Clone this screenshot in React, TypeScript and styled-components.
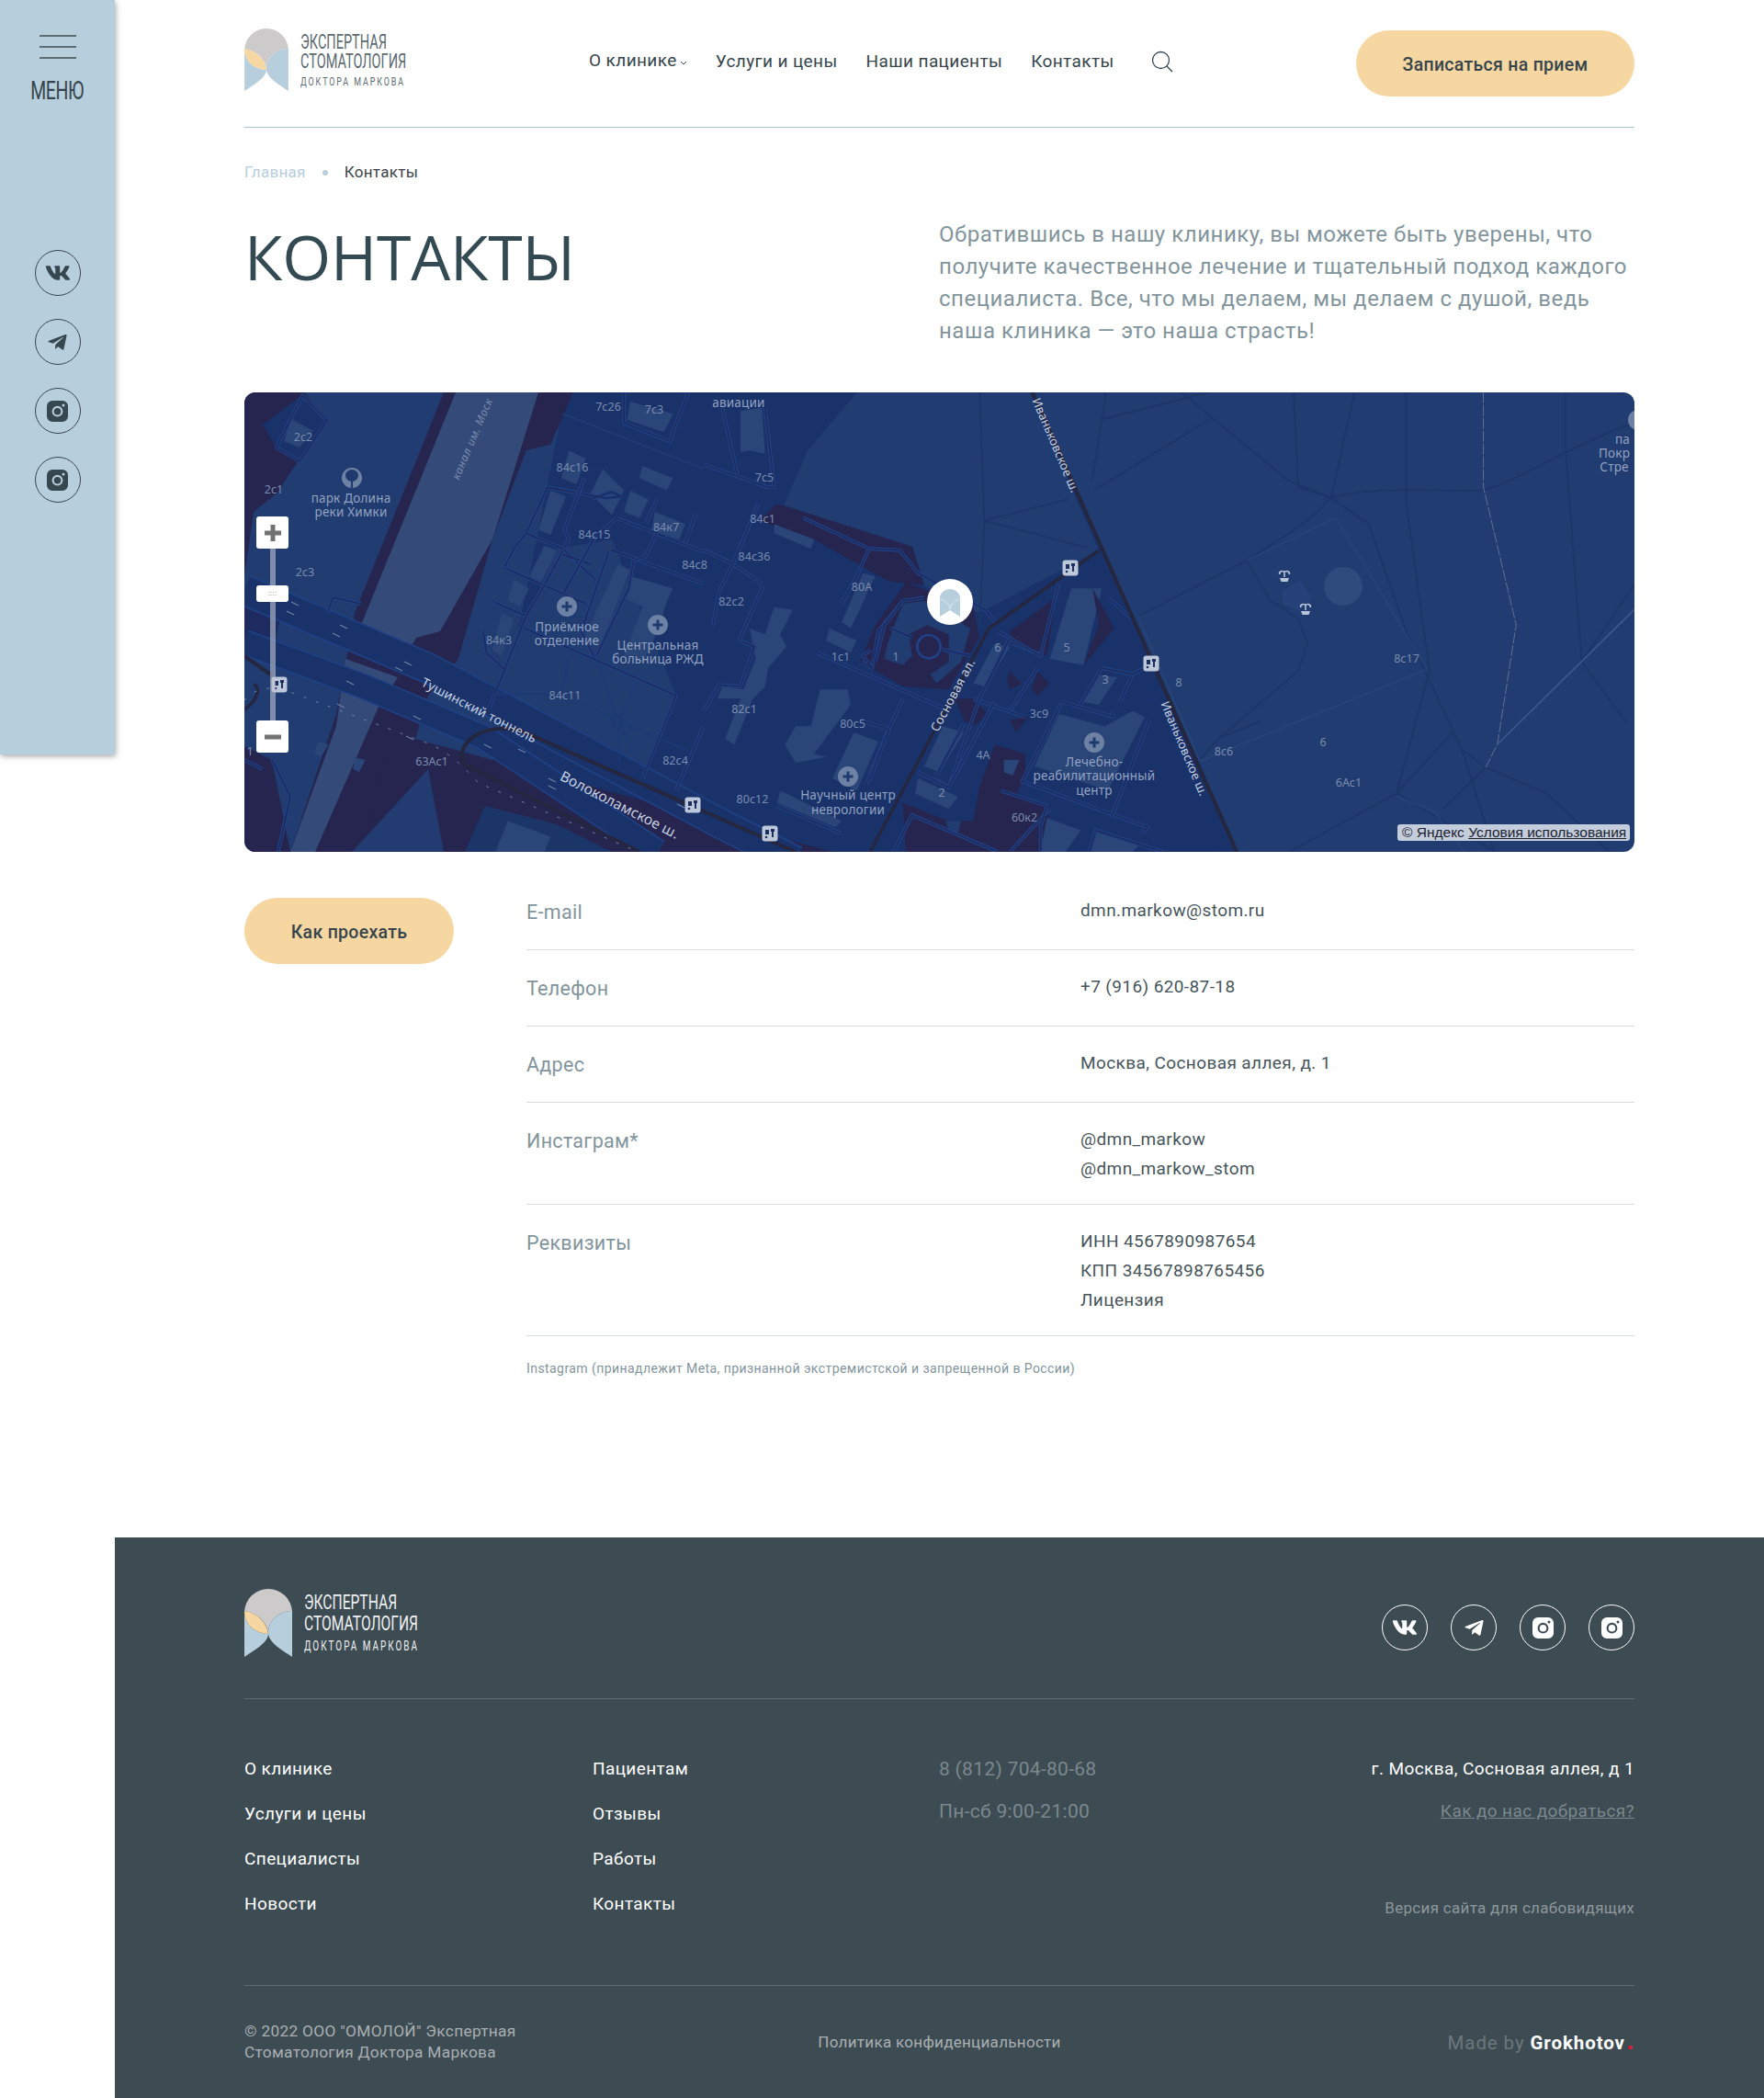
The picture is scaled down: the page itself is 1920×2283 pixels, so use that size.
import React, { FunctionComponent } from 'react';
import styled, { createGlobalStyle } from 'styled-components';
import { FaVk, FaTelegramPlane } from 'react-icons/fa';

const DARK = '#36454c';
const SAND = '#f6d7a2';
const SKY = '#b7cedc';

const GlobalStyle = createGlobalStyle`
  html, body {
    margin: 0;
    padding: 0;
    background: #fff;
  }
  body {
    font-family: Roboto, "Noto Sans", sans-serif;
    color: ${DARK};
    letter-spacing: 0.3px;
  }
  * {
    box-sizing: border-box;
  }
`;

const LogoMark: FunctionComponent<{ className?: string }> = ({ className }) => (
  <svg className={className} viewBox="0 0 52 74">
    <path d="M0 26A26 26 0 0 1 52 26V24C38 24 26 34 26 48 24 36 14 26 0 24Z" fill="#cdcacb" />
    <path d="M52 24C38 24 26 34 26 48 26 58 40 66 52 74Z" fill={SKY} />
    <path d="M0 24C0 38 10 48 26 49 26 58 12 66 0 74Z" fill={SKY} />
    <path d="M0 24C14 26 24 36 26 49 10 48 0 38 0 24Z" fill={SAND} />
  </svg>
);

const InstagramIcon = () => (
  <svg width="23" height="23" viewBox="0 0 23 23">
    <path
      fillRule="evenodd"
      fill="currentColor"
      d="M6 0H17A6 6 0 0 1 23 6V17A6 6 0 0 1 17 23H6A6 6 0 0 1 0 17V6A6 6 0 0 1 6 0ZM11.5 5.8A5.9 5.9 0 1 0 11.5 17.6 5.9 5.9 0 1 0 11.5 5.8ZM11.5 7.9A3.8 3.8 0 1 1 11.5 15.5 3.8 3.8 0 1 1 11.5 7.9ZM18 3.4A1.5 1.5 0 1 0 18 6.4 1.5 1.5 0 1 0 18 3.4Z"
    />
  </svg>
);

const Socials = () => (
  <>
    <SocialLink><FaVk size={28} /></SocialLink>
    <SocialLink><FaTelegramPlane size={23} /></SocialLink>
    <SocialLink><InstagramIcon /></SocialLink>
    <SocialLink><InstagramIcon /></SocialLink>
  </>
);

// thin road: blue casing with a dark core
const Road: FunctionComponent<{ d: string }> = ({ d }) => (
  <>
    <path d={d} fill="none" stroke="#1f4287" strokeWidth="12" strokeLinejoin="round" />
    <path d={d} fill="none" stroke="#1f2a5c" strokeWidth="5" strokeLinejoin="round" />
  </>
);

const westRoads = [
  'M190 10L270 90 180 225 105 180Z',
  'M1240 0L1240 100 1390 160 1410 100 1450 0',
  'M850 570L880 510 920 460 990 310 1180 345 1230 340 1200 325 1140 345',
  'M1110 280L1045 450 1060 480 980 630',
  'M920 460L1040 510 1145 610',
  'M1040 530L1130 560',
  'M855 575L1115 690',
  'M1215 410L1140 480 1040 660',
  'M1215 410L1500 520',
  'M1190 520L1100 780 1145 870',
  'M1200 515L1500 625',
  'M1310 430L1350 345',
  'M1270 550L1310 535 1350 450',
  'M1440 490L1475 395',
  'M1270 550L1255 640 1150 860',
  'M815 685L920 730 980 630',
  'M780 780L790 850 850 905 920 730',
  'M800 1030L850 905',
  'M915 770L1410 990 1300 1260',
  'M1410 1300L1500 1090',
  'M0 1200L60 1230',
  'M90 1200L150 1320 110 1500',
  'M270 720L290 670 380 690',
];

const westPaths = [
  'M1150 870L1220 1075 1300 1230',
  'M1280 950L1220 1075',
  'M820 985L1000 985',
  'M1095 1010L1220 1075 1450 1170',
  'M1220 1075L1225 1210',
  'M1060 860L1035 985',
];

const centerRoads = [
  'M0 235L210 310 230 310 200 50',
  'M60 50L110 270',
  'M325 410L540 510 640 515 700 590 920 710 950 750',
  'M540 510L500 600 450 690',
  'M95 560L185 620 190 640 115 810 165 830 120 960 50 955 0 1040',
  'M0 515L95 560 180 360',
  'M95 560L50 650 30 760',
  'M370 850L780 1030',
  'M650 1000L590 1130 530 1280',
  'M510 1070L605 1100 540 1270',
  'M240 1350L450 1440',
  'M650 680L570 780 550 900',
  'M1010 820L1110 860',
  'M960 780L1100 860 1160 620',
  'M1170 1010L1340 1060 1330 1040',
  'M1170 1010L1040 1270 1450 1420 1430 1440',
  'M1400 920L1360 1010',
  'M1300 900L1230 1020',
  'M1300 900L1400 920 1460 890',
  'M1090 900L1000 1040',
  'M880 1000L1050 1060',
  'M1000 800L900 1000 800 1290 750 1260',
  'M760 1250L850 1080',
  'M700 1240L800 1290',
  'M950 1010L810 1270',
  'M1130 1360L1000 1500',
  'M970 1300L1120 1350 1100 1420 1100 1500',
  'M1455 1070L1330 1390',
  'M1320 670L1400 740',
  'M620 1500L680 1380 960 1500',
  'M1260 1500L1280 1430 1500 1500',
  'M560 880L590 760 650 680 720 670',
  'M610 770L680 800',
  'M780 840L870 860',
  'M515 880L550 900 520 860 545 840',
];

const parkLines = [
  'M800 20L810 330 880 365',
  'M560 20L790 310 880 365',
  'M930 20L880 365',
  'M1040 20L1040 380 1090 930 1020 1330',
  'M880 365C1000 320 1100 350 1200 340 1260 330 1380 200 1527 120',
  'M1380 20L1380 200 1415 900 1510 1100',
  'M880 365L960 450 1040 800 1080 930 1160 1190 1210 1245 1340 1330 1480 1530',
  'M880 365C830 450 780 490 700 570L470 750',
  'M700 570L750 700 810 760 830 840 810 930 640 1150 600 1220',
  'M640 1150L730 1095',
  'M1140 1130L1020 1330 780 1530',
  'M1020 1330L1240 1530',
  'M1210 1245L1120 1380',
  'M1160 1190L1230 1530',
  'M390 110L620 20',
  'M370 310L400 20',
  'M620 110L375 340',
  'M140 440L320 370',
  'M140 440L365 530',
  'M140 440L130 20',
  'M140 440L130 800',
  'M1415 900L1527 650',
];

// little direction arrows on the highway, map coordinates
const arrows: [number, number][] = [
  [55, 230], [50, 240], [108, 255], [100, 264], [178, 295], [168, 301], [115, 316], [105, 341],
  [188, 354], [180, 376], [265, 385], [302, 390], [335, 422], [380, 440], [335, 430], [475, 450],
];

const numbers: [string, number, number][] = [
  ['7с26', 396, 20], ['7с3', 446, 23], ['2с2', 64, 53], ['2с1', 32, 110], ['2с3', 66, 200],
  ['84с16', 357, 86], ['84с15', 381, 159], ['84к7', 459, 151], ['84с8', 490, 192], ['84к3', 277, 274],
  ['84с11', 349, 334], ['63Ас1', 204, 406], ['82с4', 469, 405], ['1', 6, 395], ['7с5', 566, 97],
  ['84с1', 564, 142], ['84с36', 555, 183], ['82с2', 530, 232], ['80А', 672, 216], ['1с1', 649, 292],
  ['1', 709, 292], ['82с1', 544, 349], ['80с5', 662, 365], ['80с12', 553, 447], ['6', 820, 282],
  ['5', 895, 282], ['3', 937, 317], ['3с9', 865, 354], ['4А', 804, 399], ['2', 759, 440],
  ['60к2', 849, 467], ['8', 1017, 320], ['8с17', 1265, 294], ['8с6', 1066, 395], ['6', 1174, 385],
  ['6Ас1', 1202, 429],
];

const places: [string, number, number][] = [
  ['авиации', 538, 16], ['парк Долина', 116, 120], ['реки Химки', 116, 135], ['Приёмное', 351, 260],
  ['отделение', 351, 275], ['Центральная', 450, 280], ['больница РЖД', 450, 295], ['Научный центр', 657, 443],
  ['неврологии', 657, 459], ['Лечебно-', 925, 407], ['реабилитационный', 925, 422], ['центр', 925, 438],
  ['па', 1500, 56], ['Покр', 1491, 71], ['Стре', 1491, 86],
];

const roadNames: [string, number, number, number, number][] = [
  ['Тушинский тоннель', 255, 347, 27, 14],
  ['Волоколамское ш.', 408, 450, 27, 15.5],
  ['Сосновая ал.', 772, 330, -62, 13.5],
  ['Иваньковское ш.', 882, 58, 67, 13],
  ['Иваньковское ш.', 1022, 388, 67, 13],
];

const crosses: [number, number][] = [[351, 233], [450, 253], [657, 418], [925, 381]];
const stops: [number, number][] = [[38, 318], [488, 449], [572, 480], [899, 191], [987, 295]];

const CityMap = () => (
  <MapSvg viewBox="0 0 1513 500">
    <rect width="1513" height="500" fill="#203c70" />

    {/* hospital quarter and the land south of the park */}
    <path d="M357 0H667L613 63 587 123 727 168 740 210 800 240 930 172 855 0H857L1081 500H240L270 400 350 0Z" fill="#19326a" />
    <path d="M273 328L340 170 400 160 470 330 433 420 267 333Z" fill="#203c70" />

    {/* dark ground along the canal and the highway */}
    <path d="M217 0H358L333 57 307 63 270 160 233 290 200 330 150 500H50L100 350 120 240Z" fill="#25254f" />
    <path d="M0 0H65L90 30 55 80 35 110 10 130 0 200Z" fill="#25254f" />
    <path d="M0 230L40 240 30 290 0 280Z" fill="#1d2b60" />
    <path d="M0 385L30 400 50 500H0Z" fill="#25254f" />
    <path d="M160 370L640 500H130Z" fill="#25254f" />
    <path d="M117 500L200 410 217 500Z" fill="#223c72" />
    <path d="M240 500L262 450 340 470 400 500Z" fill="#1c3568" />
    <path d="M587 123L727 168 740 210 700 205 620 160 560 140 578 122Z" fill="#25254f" />
    <path d="M20 35L63 3 90 30 60 75 35 60Z" fill="#19326a" />

    {/* canal */}
    <path d="M230 0H320L270 160 213 260 187 267 175 287 127 253Z" fill="#344a78" />
    <path d="M110 290L167 310 147 340 100 363Z M100 363L147 340 77 500H50Z" fill="#344a78" />
    <path d="M333 57L307 63 270 160 233 290 250 285 300 170 333 60Z" fill="#203c70" />

    {/* highway bands */}
    <path d="M0 215L200 300 520 470 600 510" fill="none" stroke="#1f4287" strokeWidth="34" />
    <path d="M0 215L200 300 520 470 600 510" fill="none" stroke="#19336a" strokeWidth="31" />
    <path d="M0 272L130 320 260 375 450 500" fill="none" stroke="#1f4287" strokeWidth="28" />
    <path d="M0 272L130 320 260 375 450 500" fill="none" stroke="#19336a" strokeWidth="25" />
    {arrows.map(([x, y]) => (
      <path key={`${x}-${y}`} d={`M${x - 4} ${y - 2}L${x + 4} ${y + 2}`} stroke="#6f82a5" strokeWidth="1.2" />
    ))}

    {/* buildings */}
    <g fill="#2a4578" transform="scale(0.3333)">
      <path d="M150 85L225 125 180 180 130 160Z" />
      <path d="M1060 190L1115 215 1085 300 1035 280Z" />
      <path d="M1300 240L1400 280 1380 320 1290 280Z" />
      <path d="M1000 320L1050 340 1000 465 960 450Z" />
      <path d="M1170 250L1240 320 1200 400 1130 330Z" />
      <path d="M1260 320L1320 350 1290 410 1240 390Z" />
      <path d="M1340 390L1440 430 1420 480 1330 450Z" />
      <path d="M980 500L1020 515 970 620 930 600Z" />
      <path d="M1220 560L1260 580 1160 830 1110 800Z" />
      <path d="M880 610L930 640 900 700 860 680Z" />
      <path d="M840 720L880 740 840 860 810 840Z" />
      <path d="M1260 600L1400 640 1380 680 1350 780 1300 880 1240 860 1300 700 1240 670Z" />
      <path d="M1260 30L1400 70 1370 130 1250 90Z" />
      <path d="M240 1140L275 1150 250 1190 230 1180Z" />
      <path d="M360 1190L395 1200 375 1240 355 1230Z" />
      <path d="M860 1400L1000 1450 980 1500H820Z" />
    </g>
    <g fill="#2a4578" transform="translate(500 0) scale(0.3333)">
      <path d="M120 60L190 50 200 200 150 190 120 195Z" />
      <path d="M230 430L360 480 350 510 230 460Z" />
      <path d="M520 590L560 600 480 770 450 750Z" />
      <path d="M230 700L290 710 250 790 270 830 210 900 200 960 160 1000 100 1150 70 1130 120 1000 45 1000 60 960 130 970 170 870 150 770 200 790Z" />
      <path d="M380 970L470 970 480 1020 360 1180 400 1190 300 1210 265 1150 300 1090 350 1090Z" />
      <path d="M490 1110L570 1140 500 1300 420 1260Z" />
      <path d="M250 1300L450 1400 430 1420 240 1340Z" />
      <path d="M410 770L500 810 480 850 400 810Z" />
      <path d="M1200 640L1300 640 1240 890 1130 870Z" />
      <path d="M1160 1050L1310 1090 1400 1040 1440 1060 1320 1300 1080 1220Z" />
      <path d="M1280 920L1350 930 1290 1020 1240 1010Z" />
      <path d="M780 1090L850 1110 770 1240 720 1220Z" />
      <path d="M950 820L1000 830 920 960 880 950Z" />
      <path d="M700 1260L830 1320 800 1360 690 1310Z" />
      <path d="M1120 1390L1230 1430 1180 1500H1100Z" />
      <path d="M1280 1430L1420 1480 1400 1500H1260Z" />
    </g>

    {/* clinic grounds */}
    <g transform="translate(500 0) scale(0.3333)">
      <path d="M660 620L880 700 900 800 800 970 650 960 510 880 560 760Z" fill="#25254f" />
      <path d="M650 690L720 680 870 770 840 880 760 950 740 920 800 880 800 790 730 760 670 790 680 860 650 890 590 870 600 820Z" fill="#203c70" />
      <circle cx="735" cy="830" r="38" fill="#25254f" stroke="#1f4287" strokeWidth="8" />
      <path d="M1000 780L1150 670 1120 860 1010 820Z" fill="#25254f" />
      <path d="M1270 640L1340 770 1240 890 1290 760Z" fill="#25254f" />
      <path d="M1000 910L1040 950 1000 970 990 940ZM1090 910L1130 950 1090 990 1070 970Z" fill="#25254f" />
      <path d="M1000 1070L1060 1060 1020 1110ZM950 1150L1050 1180 1050 1240 1020 1320 1130 1350 1100 1500H660L650 1340 800 1400 880 1400 900 1290Z" fill="#25254f" />
      <path d="M820 1000L880 1000 930 1050 880 1090 850 1070Z" fill="#25254f" />
      <path d="M790 1400L840 1400 830 1440 800 1430Z" fill="#203c70" />
      <path d="M980 1200L1030 1200 1010 1250 980 1240ZM1120 1390L1230 1430 1180 1500H1100Z" fill="#2a4578" />
    </g>

    {/* streets inside the quarters */}
    <g transform="scale(0.3333)">
      {westRoads.map(d => <Road key={d} d={d} />)}
      {westPaths.map(d => <path key={d} d={d} fill="none" stroke="#1c3a77" strokeWidth="5" />)}
      <circle cx="1218" cy="1075" r="18" fill="#203c70" stroke="#1c3a77" strokeWidth="5" />
      <path d="M1040 70L1500 250" fill="none" stroke="#24427a" strokeWidth="3" />
    </g>
    <g transform="translate(500 0) scale(0.3333)">
      {centerRoads.map(d => <Road key={d} d={d} />)}
    </g>

    {/* park paths */}
    <g transform="translate(734 -7) scale(0.51 0.3333)" fill="none">
      {parkLines.map(d => <path key={d} d={d} stroke="#1c3668" strokeWidth="2" vectorEffect="non-scaling-stroke" />)}
      <path d="M700 570L890 430 1085 925 600 1225 470 760" stroke="#2b4a7e" strokeWidth="1" vectorEffect="non-scaling-stroke" />
      <path d="M1205 20L1205 330 1275 780 1235 1170 1210 1245" stroke="#5d7099" strokeWidth="1" strokeDasharray="12 2" vectorEffect="non-scaling-stroke" />
      <path d="M1235 1170L1527 730" stroke="#3c5b8d" strokeWidth="1.5" vectorEffect="non-scaling-stroke" />
      <path d="M1020 1340L1100 1390 1170 1530" stroke="#2b4a7e" strokeWidth="1" vectorEffect="non-scaling-stroke" />
    </g>
    <circle cx="1196" cy="211" r="21" fill="#2f4a7d" />
    <path d="M1130 215L1150 205 1162 225 1148 238 1130 230Z" fill="#27427a" />

    {/* main carriageways */}
    <g fill="none" stroke="#25263f" strokeLinejoin="round">
      <path d="M857 -2L1081 502" strokeWidth="4" />
      <path d="M930 172L810 257 680 502" strokeWidth="3.5" />
      <path d="M0 287L30 308" strokeWidth="4" />
      <path d="M600 500L310 372 C262 352 225 385 240 405L430 500" strokeWidth="4" />
      <path d="M0 345C15 335 18 320 10 318" strokeWidth="3.5" />
    </g>
    <path d="M0 335C10 322 30 318 50 326L200 382C225 392 240 410 255 425L440 505" fill="none" stroke="#6f82a5" strokeWidth="1" strokeDasharray="3 11" />

    {crosses.map(([x, y]) => (
      <g key={`${x}-${y}`}>
        <circle cx={x} cy={y} r="11" fill="#6d81a5" />
        <path d={`M${x - 5.5} ${y}h11M${x} ${y - 5.5}v11`} stroke="#1f3a6e" strokeWidth="3" />
      </g>
    ))}
    <circle cx="117" cy="93" r="11" fill="#6d81a5" />
    <path d="M117 104V93M111 90a6 5 0 0 1 12 0 4 4 0 0 1-12 0Z" fill="#1f3a6e" stroke="#1f3a6e" strokeWidth="2" />
    <circle cx="1517" cy="30" r="11" fill="#6d81a5" />

    {stops.map(([x, y]) => (
      <g key={`${x}-${y}`}>
        <rect x={x - 8.5} y={y - 8.5} width="17" height="17" rx="3" fill="#bcc7da" />
        <path d={`M${x - 5} ${y - 4}h4v5h-4zM${x + 1} ${y - 5}h4v3h-1v6h-2v-6h-1z`} fill="#1d2f5f" />
        <circle cx={x - 4} cy={y + 4} r="1.3" fill="#1d2f5f" />
      </g>
    ))}

    <g fill="#b8c4d8" transform="translate(1132 200)">
      <path d="M-5 2h10l-1.5 4h-7zM-0.8 -6h1.6v7h-1.6zM-6 -2a3 3 0 0 1 6-2 3 3 0 0 1 6 2h-1.5a2 2 0 0 0-4.5-1 2 2 0 0 0-4.5 1z" />
    </g>
    <g fill="#b8c4d8" transform="translate(1155 236)">
      <path d="M-5 2h10l-1.5 4h-7zM-0.8 -6h1.6v7h-1.6zM-6 -2a3 3 0 0 1 6-2 3 3 0 0 1 6 2h-1.5a2 2 0 0 0-4.5-1 2 2 0 0 0-4.5 1z" />
    </g>

    {numbers.map(([t, x, y]) => <NumberLabel key={`${t}-${x}`} x={x} y={y}>{t}</NumberLabel>)}
    {places.map(([t, x, y]) => <PlaceLabel key={`${t}-${x}`} x={x} y={y}>{t}</PlaceLabel>)}
    {roadNames.map(([t, x, y, a, size]) => (
      <RoadLabel key={`${t}-${x}`} $size={size} transform={`translate(${x} ${y}) rotate(${a})`}>{t}</RoadLabel>
    ))}
    <CanalLabel transform="translate(252 52) rotate(-67)">канал им. Моск</CanalLabel>

    {/* clinic pin */}
    <circle cx="768" cy="228" r="25" fill="#fff" />
    <g transform="translate(757 214)">
      <path d="M0 10A11 10 0 0 1 22 10V30L11 23 0 30Z" fill={SKY} />
      <path d="M1 11C7 13 10 16 11 22 12 16 15 13 21 11" fill="none" stroke="#fff" strokeWidth="0.5" />
    </g>
  </MapSvg>
);

const App: FunctionComponent = () => (
  <Page>
    <GlobalStyle />
    <Sidebar>
      <Burger>
        <span />
        <span />
        <span />
      </Burger>
      <MenuWord>МЕНЮ</MenuWord>
      <SideSocials>
        <Socials />
      </SideSocials>
    </Sidebar>

    <Main>
      <Container>
        <Header>
          <LogoLink>
            <HeaderMark />
            <LogoText>
              <LogoLine>ЭКСПЕРТНАЯ</LogoLine>
              <LogoLine>СТОМАТОЛОГИЯ</LogoLine>
              <LogoSub>ДОКТОРА МАРКОВА</LogoSub>
            </LogoText>
          </LogoLink>
          <Nav>
            <NavItem $raised>
              О клинике
              <Chevron width="8" height="5" viewBox="0 0 8 5">
                <path d="M1 1l3 3 3-3" fill="none" stroke={DARK} />
              </Chevron>
            </NavItem>
            <NavItem>Услуги и цены</NavItem>
            <NavItem>Наши пациенты</NavItem>
            <NavItem>Контакты</NavItem>
          </Nav>
          <SearchIcon width="24" height="24" viewBox="0 0 24 24">
            <circle cx="10.5" cy="10.5" r="9" fill="none" stroke={DARK} strokeWidth="1.3" />
            <path d="M17 17l6 6" stroke={DARK} strokeWidth="1.3" />
          </SearchIcon>
          <HeaderButton>Записаться на прием</HeaderButton>
        </Header>

        <Crumbs>
          <CrumbLink>Главная</CrumbLink>
          <CrumbDot />
          <span>Контакты</span>
        </Crumbs>

        <Intro>
          <Title>КОНТАКТЫ</Title>
          <Lead>
            Обратившись в нашу клинику, вы можете быть уверены, что получите качественное лечение и тщательный
            подход каждого специалиста. Все, что мы делаем, мы делаем с душой, ведь наша клиника — это наша страсть!
          </Lead>
        </Intro>

        <MapBox>
          <CityMap />
          <ZoomControls>
            <ZoomButton>
              <svg width="18" height="18" viewBox="0 0 18 18">
                <path d="M9 0v18M0 9h18" stroke="#727272" strokeWidth="5" />
              </svg>
            </ZoomButton>
            <ZoomTrack>
              <ZoomHandle>::::</ZoomHandle>
            </ZoomTrack>
            <ZoomButton>
              <svg width="18" height="6" viewBox="0 0 18 6">
                <path d="M0 3h18" stroke="#727272" strokeWidth="5" />
              </svg>
            </ZoomButton>
          </ZoomControls>
          <Copyright>
            © Яндекс <u>Условия использования</u>
          </Copyright>
        </MapBox>

        <Details>
          <RouteButton>Как проехать</RouteButton>
          <Table>
            <Row>
              <RowLabel>E-mail</RowLabel>
              <RowValue>dmn.markow@stom.ru</RowValue>
            </Row>
            <Row>
              <RowLabel>Телефон</RowLabel>
              <RowValue>+7 (916) 620-87-18</RowValue>
            </Row>
            <Row>
              <RowLabel>Адрес</RowLabel>
              <RowValue>Москва, Сосновая аллея, д. 1</RowValue>
            </Row>
            <Row>
              <RowLabel>Инстаграм*</RowLabel>
              <RowValue>
                @dmn_markow
                <br />
                @dmn_markow_stom
              </RowValue>
            </Row>
            <Row>
              <RowLabel>Реквизиты</RowLabel>
              <RowValue>
                ИНН 4567890987654
                <br />
                КПП 34567898765456
                <br />
                Лицензия
              </RowValue>
            </Row>
            <Footnote>Instagram (принадлежит Meta, признанной экстремистской и запрещенной в России)</Footnote>
          </Table>
        </Details>
      </Container>
    </Main>

    <Footer>
      <FooterTop>
        <FooterLogo>
          <FooterMark />
          <FooterLogoText>
            <FooterLogoLine>ЭКСПЕРТНАЯ</FooterLogoLine>
            <FooterLogoLine>СТОМАТОЛОГИЯ</FooterLogoLine>
            <FooterLogoSub>ДОКТОРА МАРКОВА</FooterLogoSub>
          </FooterLogoText>
        </FooterLogo>
        <FooterSocials>
          <Socials />
        </FooterSocials>
      </FooterTop>

      <FooterMiddle>
        <LinkColumn>
          <FooterLink>О клинике</FooterLink>
          <FooterLink>Услуги и цены</FooterLink>
          <FooterLink>Специалисты</FooterLink>
          <FooterLink>Новости</FooterLink>
        </LinkColumn>
        <LinkColumn>
          <FooterLink>Пациентам</FooterLink>
          <FooterLink>Отзывы</FooterLink>
          <FooterLink>Работы</FooterLink>
          <FooterLink>Контакты</FooterLink>
        </LinkColumn>
        <ContactColumn>
          <MutedLine>8 (812) 704-80-68</MutedLine>
          <MutedLine>Пн-сб 9:00-21:00</MutedLine>
        </ContactColumn>
        <AddressColumn>
          <AddressLine>г. Москва, Сосновая аллея, д 1</AddressLine>
          <RouteLink>Как до нас добраться?</RouteLink>
          <AccessLink>Версия сайта для слабовидящих</AccessLink>
        </AddressColumn>
      </FooterMiddle>

      <FooterBottom>
        <CopyText>
          © 2022 ООО "ОМОЛОЙ" Экспертная
          <br />
          Стоматология Доктора Маркова
        </CopyText>
        <Policy>Политика конфиденциальности</Policy>
        <MadeBy>
          Made by <strong>Grokhotov</strong>
          <i>.</i>
        </MadeBy>
      </FooterBottom>
    </Footer>
  </Page>
);

const Page = styled.div`
  display: grid;
  grid-template-columns: 125px 1fr;
  grid-template-rows: 1673px 610px;
  width: 1920px;
  height: 2283px;
  overflow: hidden;
`;

const Sidebar = styled.aside`
  grid-column: 1;
  grid-row: 1;
  height: 821px;
  background: ${SKY};
  box-shadow: 1px 2px 6px rgba(0, 0, 0, 0.35);
  display: flex;
  flex-direction: column;
  align-items: center;
`;

const Burger = styled.div`
  margin-top: 38px;
  width: 40px;
  display: flex;
  flex-direction: column;
  gap: 10px;
  span {
    height: 2px;
    background: #5f6e75;
  }
`;

const MenuWord = styled.div`
  margin-top: 19px;
  font-family: "Liberation Sans Narrow", Roboto, sans-serif;
  font-size: 27px;
  line-height: 32px;
  letter-spacing: -0.5px;
  transform: scaleX(0.72);
`;

const SideSocials = styled.div`
  margin-top: 157px;
  display: flex;
  flex-direction: column;
  gap: 25px;
  color: #36474f;
`;

const SocialLink = styled.a`
  width: 50px;
  height: 50px;
  border: 1.5px solid currentColor;
  border-radius: 50%;
  display: flex;
  align-items: center;
  justify-content: center;
`;

const Main = styled.main`
  grid-column: 2;
  grid-row: 1;
  padding: 0 141px;
`;

const Container = styled.div`
  width: 1513px;
`;

const Header = styled.header`
  height: 139px;
  border-bottom: 1px solid #aac4d2;
  display: flex;
  align-items: flex-start;
`;

const LogoLink = styled.a`
  width: 375px;
  margin-top: 31px;
  display: flex;
  gap: 13px;
`;

const HeaderMark = styled(LogoMark)`
  width: 48px;
  height: 68px;
`;

const LogoText = styled.div`
  padding-top: 4px;
  color: #5d6a70;
  font-family: "Liberation Sans Narrow", Roboto, sans-serif;
  letter-spacing: 0;
  transform: scaleX(0.66);
  transform-origin: left top;
`;

const LogoLine = styled.div`
  font-size: 22px;
  line-height: 21px;
`;

const LogoSub = styled.div`
  margin-top: 3px;
  font-size: 13.5px;
  line-height: 17px;
  letter-spacing: 2.9px;
`;

const Nav = styled.nav`
  margin-top: 54px;
  display: flex;
  gap: 31px;
`;

const NavItem = styled.a<{ $raised?: boolean }>`
  font-size: 19px;
  line-height: 26px;
  letter-spacing: 0.4px;
  margin-top: ${props => (props.$raised ? '-2px' : '0')};
  display: flex;
  align-items: center;
`;

const Chevron = styled.svg`
  margin-left: 3px;
  margin-top: 5px;
`;

const SearchIcon = styled.svg`
  margin-top: 55px;
  margin-left: 40px;
`;

const PillButton = styled.a`
  height: 72px;
  border-radius: 36px;
  background: ${SAND};
  color: ${DARK};
  display: flex;
  align-items: center;
  justify-content: center;
  font-size: 19.5px;
  font-weight: 500;
  padding-top: 2px;
`;

const HeaderButton = styled(PillButton)`
  width: 303px;
  margin-top: 33px;
  margin-left: auto;
`;

const Crumbs = styled.div`
  margin-top: 36px;
  display: flex;
  align-items: center;
  font-size: 17px;
  line-height: 24px;
  color: #3c4449;
`;

const CrumbLink = styled.a`
  color: ${SKY};
`;

const CrumbDot = styled.i`
  width: 6px;
  height: 6px;
  margin: 2px 18px 0;
  border-radius: 50%;
  background: ${SKY};
`;

const Intro = styled.section`
  margin-top: 39px;
  height: 189px;
  display: grid;
  grid-template-columns: 756px 1fr;
`;

const Title = styled.h1`
  margin: -4px 0 0;
  font-family: "Open Sans", sans-serif;
  font-size: 68px;
  font-weight: 400;
  line-height: 90px;
  letter-spacing: -0.2px;
  color: #344a53;
`;

const Lead = styled.p`
  margin: 0;
  font-size: 24px;
  line-height: 35px;
  letter-spacing: 0.53px;
  color: #83959c;
`;

const MapBox = styled.div`
  position: relative;
  height: 500px;
  border-radius: 12px;
  overflow: hidden;
`;

const MapSvg = styled.svg`
  display: block;
  width: 1513px;
  height: 500px;
`;

const NumberLabel = styled.text`
  font-family: "Noto Sans", sans-serif;
  font-size: 12.5px;
  fill: #7a8cae;
  text-anchor: middle;
  letter-spacing: 0;
`;

const PlaceLabel = styled.text`
  font-family: "Noto Sans", sans-serif;
  font-size: 13.5px;
  fill: #93a2c0;
  text-anchor: middle;
  letter-spacing: 0.2px;
`;

const RoadLabel = styled.text<{ $size: number }>`
  font-family: "Noto Sans", sans-serif;
  font-size: ${props => props.$size}px;
  fill: #c5cfe0;
  text-anchor: middle;
  dominant-baseline: middle;
  letter-spacing: 0.2px;
`;

const CanalLabel = styled.text`
  font-family: "Noto Sans", sans-serif;
  font-size: 12px;
  font-style: italic;
  fill: #7a8cae;
  text-anchor: middle;
  letter-spacing: 0.6px;
`;

const ZoomControls = styled.div`
  position: absolute;
  left: 13px;
  top: 135px;
  width: 35px;
  display: flex;
  flex-direction: column;
  align-items: center;
`;

const ZoomButton = styled.div`
  width: 35px;
  height: 35px;
  border-radius: 3px;
  background: #fff;
  display: flex;
  align-items: center;
  justify-content: center;
`;

const ZoomTrack = styled.div`
  position: relative;
  width: 6px;
  height: 187px;
  background: rgba(190, 195, 210, 0.6);
`;

const ZoomHandle = styled.div`
  position: absolute;
  left: -14.5px;
  top: 40px;
  width: 35px;
  height: 18px;
  border-radius: 3px;
  background: #fff;
  color: #777;
  font-size: 8px;
  line-height: 17px;
  text-align: center;
  letter-spacing: 0.5px;
`;

const Copyright = styled.div`
  position: absolute;
  right: 5px;
  bottom: 12px;
  width: 253px;
  height: 18px;
  padding-left: 5px;
  border-radius: 3px;
  background: #c4cddc;
  color: #1c2230;
  font-family: "Liberation Sans", sans-serif;
  font-size: 15.5px;
  line-height: 18px;
  letter-spacing: 0;
  white-space: nowrap;
`;

const Details = styled.section`
  margin-top: 47px;
  display: grid;
  grid-template-columns: 307px 1fr;
`;

const RouteButton = styled(PillButton)`
  width: 228px;
  margin-top: 3px;
`;

const Table = styled.div``;

const Row = styled.div`
  display: grid;
  grid-template-columns: 603px 1fr;
  padding: 24px 0 22px;
  border-bottom: 1px solid #d9dcdd;
  &:first-child {
    padding-top: 1px;
  }
`;

const RowLabel = styled.div`
  font-size: 21.5px;
  line-height: 36px;
  color: #83959c;
`;

const RowValue = styled.div`
  font-size: 19px;
  line-height: 32px;
  letter-spacing: 0.4px;
  color: #47555b;
`;

const Footnote = styled.div`
  margin-top: 25px;
  font-size: 14px;
  line-height: 20px;
  color: #83959c;
  letter-spacing: 0.43px;
`;

const Footer = styled.footer`
  grid-column: 1 / 3;
  grid-row: 2;
  margin-left: 125px;
  padding: 0 141px;
  background: #3d4b52;
  color: #fff;
`;

const FooterTop = styled.div`
  height: 176px;
  border-bottom: 1px solid #5e6a70;
  display: flex;
  justify-content: space-between;
`;

const FooterLogo = styled.a`
  margin-top: 56px;
  display: flex;
  gap: 13px;
`;

const FooterMark = styled(LogoMark)`
  width: 52px;
  height: 74px;
`;

const FooterLogoText = styled.div`
  padding-top: 3px;
  color: #eef0f1;
  font-family: "Liberation Sans Narrow", Roboto, sans-serif;
  letter-spacing: 0;
  transform: scaleX(0.71);
  transform-origin: left top;
`;

const FooterLogoLine = styled.div`
  font-size: 22px;
  line-height: 23px;
`;

const FooterLogoSub = styled.div`
  margin-top: 3px;
  font-size: 14px;
  line-height: 20px;
  letter-spacing: 2.8px;
`;

const FooterSocials = styled.div`
  margin-top: 73px;
  display: flex;
  gap: 25px;
  height: 50px;
`;

const FooterMiddle = styled.div`
  height: 312px;
  border-bottom: 1px solid #5e6a70;
  padding-top: 63px;
  display: grid;
  grid-template-columns: 379px 377px 1fr auto;
`;

const LinkColumn = styled.div`
  display: flex;
  flex-direction: column;
  gap: 23px;
`;

const FooterLink = styled.a`
  font-size: 19px;
  line-height: 26px;
  letter-spacing: 0.4px;
`;

const ContactColumn = styled.div`
  display: flex;
  flex-direction: column;
  gap: 20px;
`;

const MutedLine = styled.div`
  font-size: 21px;
  line-height: 26px;
  color: #7b888e;
`;

const AddressColumn = styled.div`
  display: flex;
  flex-direction: column;
  align-items: flex-end;
`;

const AddressLine = styled.div`
  font-size: 19px;
  line-height: 26px;
  letter-spacing: 0.4px;
`;

const RouteLink = styled.a`
  margin-top: 20px;
  font-size: 19px;
  line-height: 26px;
  letter-spacing: 0.4px;
  color: #7b888e;
  text-decoration: underline;
`;

const AccessLink = styled.a`
  margin-top: 80px;
  font-size: 17px;
  line-height: 24px;
  color: #8d979c;
`;

const FooterBottom = styled.div`
  padding-top: 38px;
  display: grid;
  grid-template-columns: 1fr auto 1fr;
  align-items: center;
`;

const CopyText = styled.div`
  font-size: 17.3px;
  line-height: 23px;
  color: #a9afb2;
`;

const Policy = styled.a`
  font-size: 17px;
  color: #a9afb2;
`;

const MadeBy = styled.div`
  text-align: right;
  font-size: 20.5px;
  color: #6c777c;
  letter-spacing: 0.9px;
  strong {
    color: #fff;
    font-weight: 700;
  }
  i {
    color: #e5173f;
    font-style: normal;
    font-weight: 900;
    font-size: 24px;
    margin-left: 2px;
  }
`;

export default App;
